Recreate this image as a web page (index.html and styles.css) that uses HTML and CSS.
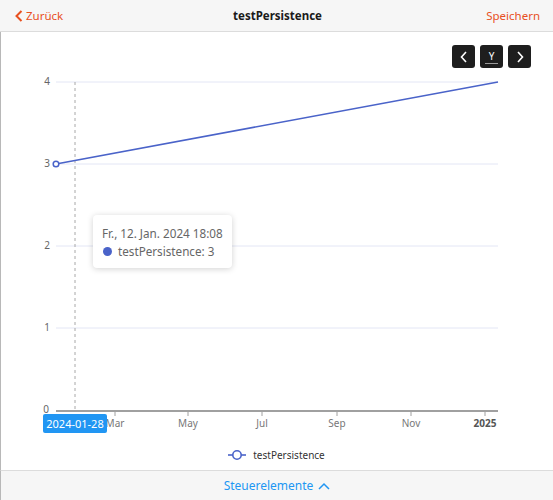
FILE: index.html
```html
<!DOCTYPE html>
<html lang="de">
<head>
<meta charset="utf-8">
<title>testPersistence</title>
<link rel="stylesheet" href="styles.css">
</head>
<body>
<div class="app">
  <header class="topbar">
    <a class="back">
      <svg class="back-icon" width="8" height="12" viewBox="0 0 8 12"><path d="M6.5 1 L1.5 6 L6.5 11" fill="none" stroke="currentColor" stroke-width="2"/></svg>
      <span>Zurück</span>
    </a>
    <div class="title">testPersistence</div>
    <a class="save">Speichern</a>
  </header>

  <main class="content">
    <div class="toolbar">
      <button class="tbtn"><svg width="10" height="12" viewBox="0 0 10 12"><path d="M7 1 L2.5 6 L7 11" fill="none" stroke="#fff" stroke-width="1.6"/></svg></button>
      <button class="tbtn tbtn-y"><span class="ylabel">Y</span></button>
      <button class="tbtn"><svg width="10" height="12" viewBox="0 0 10 12"><path d="M3 1 L7.5 6 L3 11" fill="none" stroke="#fff" stroke-width="1.6"/></svg></button>
    </div>

    <svg class="chart" width="552" height="372" viewBox="1 68 552 372">
      <g class="grid">
        <line x1="56" y1="82" x2="498" y2="82"/>
        <line x1="56" y1="164" x2="498" y2="164"/>
        <line x1="56" y1="246" x2="498" y2="246"/>
        <line x1="56" y1="328" x2="498" y2="328"/>
      </g>
      <g class="ylabels">
        <text x="50" y="85">4</text>
        <text x="50" y="167">3</text>
        <text x="50" y="249">2</text>
        <text x="50" y="331">1</text>
        <text x="49" y="413">0</text>
      </g>
      <line class="crosshair" x1="75" y1="82" x2="75" y2="410"/>
      <line class="xaxis" x1="56" y1="411" x2="498" y2="411"/>
      <g class="ticks">
        <line x1="115" y1="411" x2="115" y2="416"/>
        <line x1="188" y1="411" x2="188" y2="416"/>
        <line x1="262" y1="411" x2="262" y2="416"/>
        <line x1="337" y1="411" x2="337" y2="416"/>
        <line x1="411" y1="411" x2="411" y2="416"/>
        <line x1="485" y1="411" x2="485" y2="416"/>
      </g>
      <g class="xlabels">
        <text x="115" y="426.5">Mar</text>
        <text x="188" y="426.5">May</text>
        <text x="262" y="426.5">Jul</text>
        <text x="337" y="426.5">Sep</text>
        <text x="411" y="426.5">Nov</text>
        <text class="year" x="485" y="426.5">2025</text>
      </g>
      <line class="series" x1="56" y1="164" x2="498" y2="82"/>
      <circle class="point" cx="56" cy="164" r="2.8"/>
      <rect class="xlabel-box" x="43" y="414" width="64" height="19" rx="2"/>
      <text class="xlabel-text" x="75" y="427.5">2024-01-28</text>
    </svg>

    <div class="legend">
      <svg width="18" height="12" viewBox="0 0 18 12"><line x1="0" y1="6" x2="18" y2="6" stroke="#4a63c9" stroke-width="1.6"/><circle cx="9" cy="6" r="4.2" fill="#fff" stroke="#4a63c9" stroke-width="1.6"/></svg>
      <span>testPersistence</span>
    </div>

    <div class="tooltip">
      <div class="tt-date">Fr., 12. Jan. 2024 18:08</div>
      <div class="tt-row"><span class="tt-dot"></span>testPersistence: 3</div>
    </div>
  </main>

  <footer class="bottombar">
    <a class="controls">Steuerelemente
      <svg width="12" height="8" viewBox="0 0 12 8"><path d="M1 7 L6 2 L11 7" fill="none" stroke="currentColor" stroke-width="1.5"/></svg>
    </a>
  </footer>
</div>
</body>
</html>
```

FILE: styles.css
```css
html, body {
  margin: 0;
  padding: 0;
  background: #fff;
}
body {
  font-family: "Noto Sans", "Open Sans", sans-serif;
  color: #222;
}
.app {
  width: 553px;
  height: 500px;
  display: flex;
  flex-direction: column;
}
.topbar {
  height: 31px;
  flex: none;
  background: #f6f6f6;
  border-bottom: 1px solid #dcdcdc;
  display: grid;
  grid-template-columns: 1fr auto 1fr;
  align-items: center;
  padding: 0 13px 0 15px;
  font-size: 11.5px;
}
.back {
  color: #e8501f;
  display: flex;
  align-items: center;
  gap: 3px;
  justify-self: start;
}
.back-icon {
  display: block;
}
.title {
  font-weight: bold;
  color: #1a1a1a;
}
.save {
  color: #e8501f;
  justify-self: end;
}
.content {
  flex: 1;
  position: relative;
  border-left: 1px solid #b8b8b8;
  display: flex;
  flex-direction: column;
}
.toolbar {
  display: flex;
  justify-content: flex-end;
  gap: 5px;
  padding: 13px 22px 0 0;
  height: 23px;
}
.tbtn {
  width: 23px;
  height: 23px;
  padding: 0;
  border: none;
  border-radius: 3px;
  background: #1e1e1e;
  display: flex;
  align-items: center;
  justify-content: center;
}
.ylabel {
  color: #fff;
  font-family: "Noto Sans", sans-serif;
  font-size: 10px;
  line-height: 12px;
  padding: 0 4px 1px;
  border-bottom: 1.5px solid #9a9a9a;
  margin-top: 1px;
}
.chart {
  display: block;
  font-family: "Noto Sans", "Open Sans", sans-serif;
}
.grid line {
  stroke: #e3e6f5;
  stroke-width: 1;
}
.ylabels text {
  font-size: 10px;
  fill: #666;
  text-anchor: end;
}
.crosshair {
  stroke: #a8a8a8;
  stroke-width: 1;
  stroke-dasharray: 3 3;
}
.xaxis {
  stroke: #a0a0a0;
  stroke-width: 2;
}
.ticks line {
  stroke: #a0a0a0;
  stroke-width: 1;
}
.xlabels text {
  font-size: 10px;
  fill: #777;
  text-anchor: middle;
}
.xlabels .year {
  font-weight: bold;
  fill: #555;
}
.series {
  stroke: #4a63c9;
  stroke-width: 1.6;
}
.point {
  fill: #fff;
  stroke: #4a63c9;
  stroke-width: 1.5;
}
.xlabel-box {
  fill: #2196f3;
}
.xlabel-text {
  fill: #fff;
  font-size: 11px;
  text-anchor: middle;
}
.legend {
  height: 30px;
  display: flex;
  align-items: center;
  justify-content: center;
  gap: 7px;
  font-size: 10px;
  color: #333;
  padding-right: 1px;
}
.legend svg {
  display: block;
}
.tooltip {
  position: absolute;
  left: 92px;
  top: 183px;
  width: 121px;
  padding: 9px 9px 8px 9px;
  background: #fff;
  border-radius: 4px;
  box-shadow: 0 1px 6px rgba(0, 0, 0, 0.18);
  font-size: 11.7px;
  line-height: 18px;
  color: #666;
  white-space: nowrap;
}
.tt-row {
  display: flex;
  align-items: center;
}
.tt-dot {
  width: 9px;
  height: 9px;
  border-radius: 50%;
  background: #4a63c9;
  margin: 0 6px 0 1px;
}
.bottombar {
  height: 29px;
  flex: none;
  background: #f6f6f6;
  border-top: 1px solid #dcdcdc;
  border-left: 1px solid #b8b8b8;
  display: flex;
  align-items: center;
  justify-content: center;
}
.controls {
  color: #2196f3;
  font-size: 12px;
  display: flex;
  align-items: center;
  gap: 5px;
}
.controls svg {
  display: block;
}
```
